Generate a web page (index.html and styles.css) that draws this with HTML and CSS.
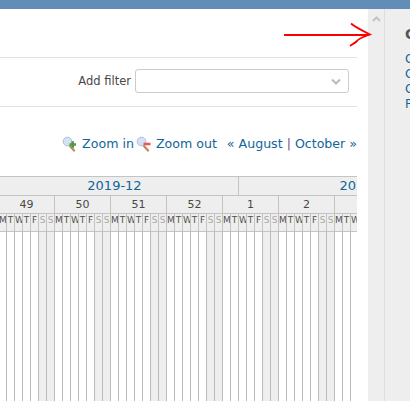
FILE: index.html
```html
<!DOCTYPE html>
<html lang="en">
<head>
<meta charset="utf-8">
<title>Gantt</title>
<link rel="stylesheet" href="styles.css">
</head>
<body>
<div class="topbar"></div>
<div class="layout">
  <main class="main">
    <div class="title-space"></div>
    <div class="filter-row">
      <label class="filter-label">Add filter</label>
      <div class="select">
        <svg class="select-chevron" width="10" height="7" viewBox="0 0 10 7"><path d="M1 1.5 L5 5.5 L9 1.5" fill="none" stroke="#bbb" stroke-width="2"/></svg>
      </div>
    </div>
    <div class="toolbar">
      <a class="tool">
        <svg class="icon" width="16" height="16" viewBox="0 0 16 16"><path d="M8 10 L12 14.5" stroke="#c08a52" stroke-width="2.2" stroke-linecap="round"/><circle cx="5.5" cy="5.5" r="4.3" fill="#d3e3f6" stroke="#a9bfdc"/><path d="M7.5 8.5 H14 M10.75 5.2 V11.8" stroke="#4f9a45" stroke-width="2.6"/></svg>
        Zoom in
      </a>
      <a class="tool">
        <svg class="icon" width="16" height="16" viewBox="0 0 16 16"><path d="M8 10 L12 14.5" stroke="#c08a52" stroke-width="2.2" stroke-linecap="round"/><circle cx="5.5" cy="5.5" r="4.3" fill="#d3e3f6" stroke="#a9bfdc"/><path d="M7.5 8 H14.5" stroke="#e8555f" stroke-width="2.6"/></svg>
        Zoom out
      </a>
      <span class="pager"><a>« August</a> <span class="sep">|</span> <a>October »</a></span>
    </div>
    <div class="gantt">
      <div class="gantt-inner">
        <div class="row months">
          <div class="month m31"><a>2019-12</a></div>
          <div class="month m31"><a>2020-1</a></div>
        </div>
        <div class="row weeks">
          <div class="week w1"></div>
          <div class="week w7">49</div>
          <div class="week w7">50</div>
          <div class="week w7">51</div>
          <div class="week w7">52</div>
          <div class="week w7">1</div>
          <div class="week w7">2</div>
          <div class="week w7">3</div>
        </div>
        <div class="row days">
          <div class="day off">S</div>
          <div class="day">M</div><div class="day">T</div><div class="day">W</div><div class="day">T</div><div class="day">F</div><div class="day off">S</div><div class="day off">S</div>
          <div class="day">M</div><div class="day">T</div><div class="day">W</div><div class="day">T</div><div class="day">F</div><div class="day off">S</div><div class="day off">S</div>
          <div class="day">M</div><div class="day">T</div><div class="day">W</div><div class="day">T</div><div class="day">F</div><div class="day off">S</div><div class="day off">S</div>
          <div class="day">M</div><div class="day">T</div><div class="day">W</div><div class="day">T</div><div class="day">F</div><div class="day off">S</div><div class="day off">S</div>
          <div class="day">M</div><div class="day">T</div><div class="day">W</div><div class="day">T</div><div class="day">F</div><div class="day off">S</div><div class="day off">S</div>
          <div class="day">M</div><div class="day">T</div><div class="day">W</div><div class="day">T</div><div class="day">F</div><div class="day off">S</div><div class="day off">S</div>
          <div class="day">M</div><div class="day">T</div><div class="day">W</div>
        </div>
        <div class="row body">
          <div class="col off"></div>
          <div class="col"></div><div class="col"></div><div class="col"></div><div class="col"></div><div class="col"></div><div class="col off"></div><div class="col off"></div>
          <div class="col"></div><div class="col"></div><div class="col"></div><div class="col"></div><div class="col"></div><div class="col off"></div><div class="col off"></div>
          <div class="col"></div><div class="col"></div><div class="col"></div><div class="col"></div><div class="col"></div><div class="col off"></div><div class="col off"></div>
          <div class="col"></div><div class="col"></div><div class="col"></div><div class="col"></div><div class="col"></div><div class="col off"></div><div class="col off"></div>
          <div class="col"></div><div class="col"></div><div class="col"></div><div class="col"></div><div class="col"></div><div class="col off"></div><div class="col off"></div>
          <div class="col"></div><div class="col"></div><div class="col"></div><div class="col"></div><div class="col"></div><div class="col off"></div><div class="col off"></div>
          <div class="col"></div><div class="col"></div><div class="col"></div>
        </div>
      </div>
    </div>
  </main>
  <div class="strip">
    <svg class="strip-chevron" width="9" height="6" viewBox="0 0 9 6"><path d="M1 5 L4.5 1.5 L8 5" fill="none" stroke="#c4c4c4" stroke-width="2"/></svg>
  </div>
  <aside class="sidebar">
    <h3 class="side-title">Custom queries</h3>
    <a class="side-link">Calendar</a>
    <a class="side-link">Gantt</a>
    <a class="side-link">Charts</a>
    <a class="side-link">Preferences</a>
  </aside>
</div>
<svg class="arrow" width="92" height="30" viewBox="0 0 92 30"><path d="M1 13 H85 M68 1.5 C72 5 78 8 87 12.5 C80 15 76 16 74 19 C72 21 70 22 67 24" fill="none" stroke="#ff0000" stroke-width="1.8"/></svg>
</body>
</html>
```
FILE: styles.css
```css
* { box-sizing: border-box; }
html, body { margin: 0; height: 100%; overflow: hidden; }
body {
  position: relative;
  display: flex;
  flex-direction: column;
  background: #fff;
  font-family: "DejaVu Sans", sans-serif;
  font-size: 12px;
  color: #484848;
}
a { color: #169; text-decoration: none; }

.topbar { height: 9px; flex: none; background: #628db6; }
.layout { flex: 1; display: flex; min-height: 0; }

.main { width: 368px; flex: none; padding-right: 11px; overflow: hidden; }
.title-space { height: 49px; border-bottom: 1px solid #e2e2e2; }
.filter-row {
  height: 49px;
  display: flex;
  justify-content: flex-end;
  align-items: center;
  gap: 4px;
  padding-right: 8px;
  padding-bottom: 2px;
  border-bottom: 1px solid #e2e2e2;
}
.filter-label { font-size: 11.5px; }
.select {
  position: relative;
  width: 214px;
  height: 24px;
  border: 1px solid #ccc;
  border-radius: 3px;
}
.select-chevron { position: absolute; right: 7px; top: 8px; }

.toolbar {
  height: 69px;
  padding-top: 29px;
  display: flex;
  justify-content: flex-end;
  align-items: flex-start;
  gap: 2px;
  font-size: 12.6px;
  line-height: 16px;
}
.tool { display: flex; align-items: center; gap: 4px; color: #169; }
.icon { flex: none; }
.pager { margin-left: 8px; white-space: pre-wrap; color: #169; }
.sep { color: #7a4a8a; }

.gantt { width: 357px; height: 300px; overflow: hidden; }
.gantt-inner { margin-left: -10px; width: 400px; }
.row { display: flex; }

.months { height: 20px; border-top: 1px solid #c4c4c4; border-bottom: 1px solid #c4c4c4; background: #eee; }
.month { flex: none; text-align: center; font-size: 13px; line-height: 18px; border-left: 1px solid #c4c4c4; }
.m31 { width: 248px; }

.weeks { height: 18px; border-bottom: 1px solid #c4c4c4; background: #eee; }
.week { flex: none; text-align: center; font-size: 11px; line-height: 17px; border-left: 1px solid #c4c4c4; color: #484848; }
.w1 { width: 8px; }
.w7 { width: 56px; }

.days { height: 18px; border-bottom: 1px solid #c4c4c4; }
.day {
  flex: none;
  width: 8px;
  background: #eee;
  border-left: 1px solid #c4c4c4;
  font-size: 9px;
  line-height: 12px;
  text-align: center;
  color: #505050;
  overflow: visible;
}
.day.off { color: #a8a8a8; }

.body { height: 200px; }
.col { flex: none; width: 8px; border-left: 1px solid #bbb; }
.col.off { background: #eee; }

.strip { width: 17px; flex: none; background: #eee; border-right: 1px solid #ddd; padding: 7px 0 0 4px; }
.strip-chevron { display: block; }

.sidebar { flex: 1; min-width: 0; background: #eee; padding: 17px 0 0 20px; overflow: hidden; white-space: nowrap; }
.side-title { margin: 0 0 10px; font-size: 14px; line-height: 16px; color: #555; font-weight: bold; }
.side-link { display: block; line-height: 15px; }

.arrow { position: absolute; left: 283px; top: 22px; }
```
